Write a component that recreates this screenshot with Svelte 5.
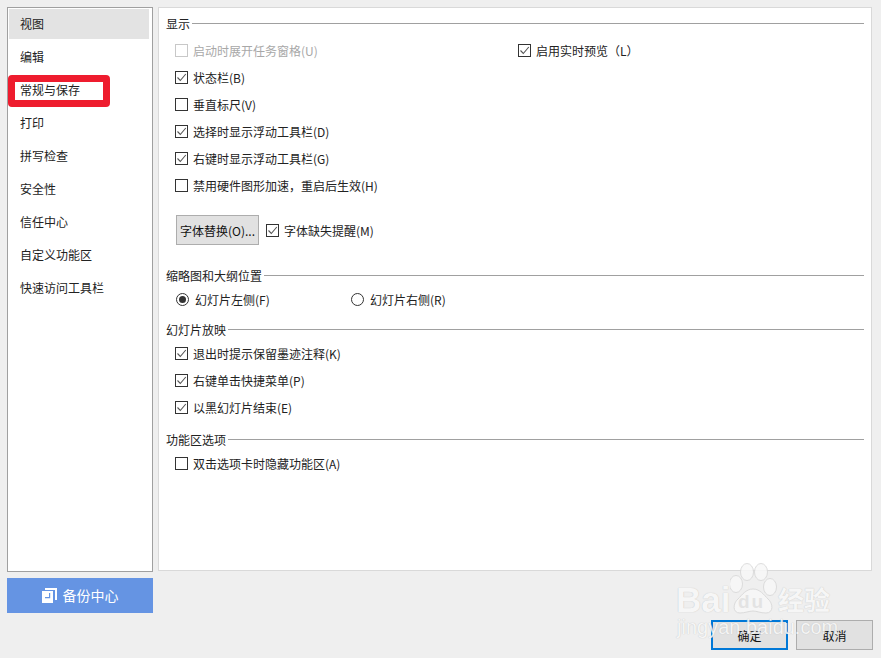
<script>
	const navItems = ['视图', '编辑', '常规与保存', '打印', '拼写检查', '安全性', '信任中心', '自定义功能区', '快速访问工具栏'];

	const slideRows = [
		{ label: '退出时提示保留墨迹注释(K)', checked: true },
		{ label: '右键单击快捷菜单(P)', checked: true },
		{ label: '以黑幻灯片结束(E)', checked: true }
	];
	const displayRows = [
		{ label: '状态栏(B)', checked: true },
		{ label: '垂直标尺(V)', checked: false },
		{ label: '选择时显示浮动工具栏(D)', checked: true },
		{ label: '右键时显示浮动工具栏(G)', checked: true },
		{ label: '禁用硬件图形加速，重启后生效(H)', checked: false }
	];
</script>

{#snippet check(label, checked, disabled = false)}
	<div class="check" class:disabled>
		<span class="box">
			{#if checked}
				<svg width="11" height="11" viewBox="0 0 11 11"><path d="M1.5 5.5 L4.3 8.5 L9.8 2" fill="none" stroke="#555" stroke-width="1.1" /></svg>
			{/if}
		</span>
		<span>{label}</span>
	</div>
{/snippet}

{#snippet radio(label, on)}
	<div class="check radio">
		<span class="circle">{#if on}<i></i>{/if}</span>
		<span>{label}</span>
	</div>
{/snippet}

<div class="dialog">
	<div class="top">
		<div class="left">
			<nav class="nav">
				{#each navItems as item, i}
					<div class="nav-item" class:active={i === 0}>{item}</div>
				{/each}
				<div class="highlight"></div>
			</nav>
			<button class="backup">
				<svg width="15" height="15" viewBox="0 0 15 15">
					<path d="M0 3 H11 V15 H0 Z" fill="#fff" />
					<path d="M3 0 H15 V12 H13 V2 H3 Z" fill="#fff" />
					<path d="M7 5 V9 H3 V10.2 H8.2 V5 Z" fill="#6594e3" />
				</svg>
				<span>备份中心</span>
			</button>
		</div>

		<main class="panel">
			<h3 class="group"><span>显示</span></h3>
			<div class="two-col">
				{@render check('启动时展开任务窗格(U)', false, true)}
				{@render check('启用实时预览（L）', true)}
			</div>
			{#each displayRows as row}
				{@render check(row.label, row.checked)}
			{/each}
			<div class="font-row">
				<button class="btn font-btn">字体替换(O)...</button>
				{@render check('字体缺失提醒(M)', true)}
			</div>

			<h3 class="group second"><span>缩略图和大纲位置</span></h3>
			<div class="two-col radios">
				{@render radio('幻灯片左侧(F)', true)}
				{@render radio('幻灯片右侧(R)', false)}
			</div>

			<h3 class="group third"><span>幻灯片放映</span></h3>
			{#each slideRows as row}
				{@render check(row.label, row.checked)}
			{/each}

			<h3 class="group fourth"><span>功能区选项</span></h3>
			{@render check('双击选项卡时隐藏功能区(A)', false)}
		</main>
	</div>

	<footer class="footer">
		<button class="btn ok">确定</button>
		<button class="btn cancel">取消</button>
	</footer>

	<div class="watermark">
		<svg class="paw" width="60" height="60" viewBox="0 0 60 60">
			<g fill="#f8f8f8" stroke="#d8d8d8" stroke-width="1">
				<ellipse cx="6" cy="21" rx="6.5" ry="8.5" />
				<ellipse cx="17" cy="9" rx="6.5" ry="8.5" />
				<ellipse cx="31" cy="9" rx="6.5" ry="8.5" />
				<ellipse cx="40" cy="24" rx="6.5" ry="8.5" />
				<path d="M23 26 C30 26 34 32 38 36 C43 40 44 50 36 50 C30 50 27 48 23 48 C19 48 15 50 10 50 C2 50 3 40 8 36 C12 32 16 26 23 26 Z" />
			</g>
		</svg>
		<span class="wm-bai">Bai</span>
		<span class="wm-du">du</span>
		<span class="wm-jy">经验</span>
		<span class="wm-sub">jingyan.baidu.com</span>
	</div>
</div>

<style>
	:global(body) {
		background: #efefef;
	}

	.dialog {
		position: relative;
		width: 881px;
		height: 658px;
		box-sizing: border-box;
		padding: 7px 8px 0 7px;
		background: #efefef;
		font-family: "Noto Sans CJK SC", "Liberation Sans", sans-serif;
		font-size: 12px;
		color: #222;
		overflow: hidden;
	}

	.top {
		display: flex;
		gap: 5px;
	}

	.left {
		width: 146px;
		display: flex;
		flex-direction: column;
		gap: 6px;
	}

	.nav {
		position: relative;
		height: 565px;
		box-sizing: border-box;
		padding: 1px;
		background: #fff;
		border: 1px solid #a0a0a0;
	}

	.nav-item {
		height: 33px;
		line-height: 32px;
		padding-left: 11px;
		margin-right: 2px;
	}

	.nav-item.active {
		height: 30px;
		line-height: 30px;
		margin-bottom: 2px;
		background: #e3e3e3;
	}

	.highlight {
		position: absolute;
		left: 0;
		top: 67px;
		width: 102px;
		height: 32px;
		box-sizing: border-box;
		border: 7px solid #ee1c2e;
		border-radius: 4px;
	}

	.backup {
		height: 35px;
		display: flex;
		align-items: center;
		justify-content: center;
		gap: 6px;
		background: #6594e3;
		border: none;
		color: #fff;
		font: inherit;
		font-size: 14px;
		padding: 0;
	}

	.backup span {
		position: relative;
		top: -1px;
	}

	.panel {
		width: 714px;
		height: 564px;
		box-sizing: border-box;
		padding: 6px 7px 0 7px;
		background: #fff;
		border: 1px solid #d9d9d9;
	}

	.group {
		display: flex;
		align-items: center;
		gap: 2px;
		height: 18px;
		margin: 0 0 2px;
		font: inherit;
	}

	.group::after {
		content: '';
		flex: 1;
		height: 1px;
		background: #a0a0a0;
	}

	.group.second {
		margin-top: 21px;
	}

	.group.third {
		margin-top: 7px;
	}

	.group.fourth {
		margin-top: 9px;
	}

	.check {
		display: flex;
		align-items: center;
		gap: 5px;
		height: 27px;
		padding-left: 9px;
	}

	.check.radio {
		gap: 6px;
		padding-left: 10px;
	}

	.check.disabled {
		color: #a8a8a8;
	}

	.box {
		width: 11px;
		height: 11px;
		flex: none;
		border: 1px solid #333;
		background: #fff;
		display: flex;
	}

	.disabled .box {
		border-color: #c8c8c8;
	}

	.two-col {
		display: grid;
		grid-template-columns: 343px 1fr;
		margin-top: 5px;
	}

	.radios {
		grid-template-columns: 175px 1fr;
		margin-top: 2px;
	}

	.circle {
		width: 11px;
		height: 11px;
		flex: none;
		border: 1px solid #333;
		border-radius: 50%;
		display: flex;
		align-items: center;
		justify-content: center;
	}

	.circle i {
		width: 7px;
		height: 7px;
		border-radius: 50%;
		background: #333;
	}

	.btn {
		box-sizing: border-box;
		background: #e1e1e1;
		border: 1px solid #adadad;
		font: inherit;
		color: #111;
		padding: 0;
	}

	.font-row {
		display: flex;
		align-items: center;
		margin-top: 16px;
	}

	.font-btn {
		width: 83px;
		height: 30px;
		margin-left: 10px;
	}

	.font-row .check {
		padding-left: 7px;
	}

	.footer {
		display: flex;
		justify-content: flex-end;
		gap: 8px;
		margin-top: 7px;
	}

	.ok,
	.cancel {
		width: 77px;
		height: 30px;
	}

	.ok {
		border: 2px solid #0078d7;
	}

	.watermark {
		position: absolute;
		left: 665px;
		top: 555px;
		width: 180px;
		height: 95px;
		pointer-events: none;
		color: #f8f8f8;
		font-family: "Liberation Sans", "Noto Sans CJK SC", sans-serif;
		text-shadow: 0 0 1px #b4b4b4;
		opacity: 0.85;
		white-space: nowrap;
	}

	.watermark span {
		position: absolute;
	}

	.paw {
		position: absolute;
		left: 65px;
		top: 8px;
	}

	.wm-bai {
		left: 11px;
		top: 25px;
		font-size: 35px;
		line-height: 40px;
		font-weight: 700;
	}

	.wm-du {
		left: 73px;
		top: 37px;
		font-size: 19px;
		line-height: 20px;
		font-weight: 700;
		letter-spacing: 2px;
		color: #e2e2e2;
		text-shadow: none;
	}

	.wm-jy {
		left: 113px;
		top: 24px;
		font-family: "Noto Sans CJK SC", sans-serif;
		font-size: 26px;
		line-height: 40px;
		font-weight: 700;
	}

	.wm-sub {
		left: 12px;
		top: 60px;
		font-size: 20px;
		line-height: 24px;
	}
</style>
